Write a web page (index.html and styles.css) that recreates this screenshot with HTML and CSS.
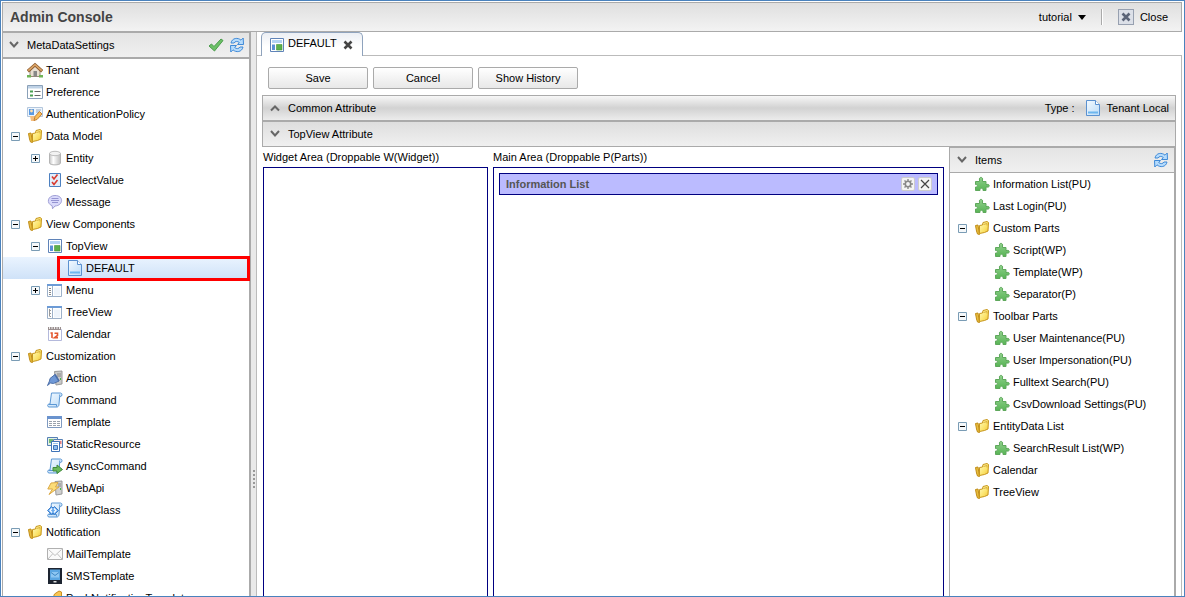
FILE: index.html
```html
<!DOCTYPE html>
<html lang="en">
<head>
<meta charset="utf-8">
<title>Admin Console</title>
<link rel="stylesheet" href="styles.css">
</head>
<body>
<svg class="sprite" aria-hidden="true">
  <defs>
    <linearGradient id="gold" x1="0" y1="0" x2="1" y2="1"><stop offset="0" stop-color="#fffbc0"/><stop offset=".6" stop-color="#fbe36a"/><stop offset="1" stop-color="#eebf35"/></linearGradient>
    <linearGradient id="sky" x1="0" y1="0" x2="1" y2="1"><stop offset="0" stop-color="#f4faff"/><stop offset="1" stop-color="#bcdcf8"/></linearGradient>
    <linearGradient id="steel" x1="0" y1="0" x2="1" y2="0"><stop offset="0" stop-color="#c4c4c4"/><stop offset=".35" stop-color="#fff"/><stop offset="1" stop-color="#bcbcbc"/></linearGradient>
    <linearGradient id="leaf" x1="0" y1="0" x2="0" y2="1"><stop offset="0" stop-color="#8fd08b"/><stop offset="1" stop-color="#58b455"/></linearGradient>
  </defs>
  <symbol id="folder" viewBox="0 0 16 16"><path d="M1.500 5.500 4 5l1.500 9.500-2-.5-1-3z" fill="#e9bd3c" stroke="#c08d18"/><path d="M5.500 13.500V5.500L8.500 5l.5-2.500L13 1.500l1.500 1-.5 8.500-3.500 1.500z" fill="url(#gold)" stroke="#c7961c"/><path d="M9.500 4.500 13 3.500v2" fill="none" stroke="#d8ae3a"/></symbol>
  <symbol id="home" viewBox="0 0 16 16"><path d="M3 8v6.500h10V8L8 4z" fill="#e9dfd2" stroke="#9b8a78"/><path d="M.8 9.200 8 2.800l7.200 6.400" fill="none" stroke="#8f5d30" stroke-width="3.200"/><path d="M1.300 8.700 8 2.700l6.700 6" fill="none" stroke="#dca668" stroke-width="1.600"/><path d="M6.500 9h3.500v5.500H6.500z" fill="#888"/><path d="M0 13h4v2.500H0zM12 13h4v2.500h-4z" fill="#6fb457"/></symbol>
  <symbol id="pref" viewBox="0 0 16 16"><path d="M.5 1.500h15v13H.5z" fill="#fff" stroke="#8aa0b8"/><path d="M1 2h14v2.500H1z" fill="#bfd2e6"/><path d="M3 6.500h3v2H3zM3 10.500h3v2H3z" fill="#4aa052"/><path d="M7.500 7.500h6M7.500 11.500h6" stroke="#666"/></symbol>
  <symbol id="auth" viewBox="0 0 16 16"><path d="M.5 1.500h15v9H.5z" fill="#eef5fc" stroke="#b3c6dc"/><path d="M2 3h5v6H2z" fill="#5b9ae2"/><circle cx="4.500" cy="5" r="1.400" fill="#ffe0b0"/><path d="M9 4h5M9 6h4" stroke="#93a9c4"/><path d="M3 10h4l1 5H4z" fill="#f5bf80"/><path d="m7 14.500 1-4 4.500-5L15 8l-5 5.500z" fill="#f9bd58" stroke="#c27f34"/></symbol>
  <symbol id="entity" viewBox="0 0 16 16"><path d="M2.500 3.500v9.500c0 2.500 11 2.500 11 0V3.500z" fill="url(#steel)" stroke="#b4b4b4"/><ellipse cx="8" cy="3.500" rx="5.500" ry="2.200" fill="#f2f2f2" stroke="#bdbdbd"/></symbol>
  <symbol id="select" viewBox="0 0 16 16"><path d="M2.500 1.500h11v13h-11z" fill="#e2eefb" stroke="#4c80c0"/><path d="m5 4.500 2 2.500 3.500-4.500M5 10l2 2.500L10.500 8" fill="none" stroke="#d83a2f" stroke-width="1.600"/></symbol>
  <symbol id="message" viewBox="0 0 16 16"><path d="M8 1.500c9 0 8.500 10 0 10.500l-2.500 2.800-.3-3C-1 9.500.5 1.500 8 1.500z" fill="#dadafb" stroke="#a09fd6"/><path d="M4.500 4.500h7M4 6.500h8M5 8.500h6" stroke="#9594d2"/></symbol>
  <symbol id="topview" viewBox="0 0 16 16"><path d="M1.500 1.500h13v13h-13z" fill="#fff" stroke="#5f83b8"/><path d="M3 3h10v3H3z" fill="#b3d3f3"/><path d="M3 7.500h3V13H3z" fill="#5a90d4"/><path d="M7.500 7.500H13V13H7.500z" fill="#5cb04c" stroke="#459638" stroke-width=".6"/></symbol>
  <symbol id="page" viewBox="0 0 16 16"><path d="M1.500.5h9l4 4v11h-13z" fill="url(#sky)" stroke="#5b91d0"/><path d="M10.500.5v4h4" fill="#fff" stroke="#5b91d0"/><path d="M3 12.500h10" stroke="#6db6ee" stroke-width="2"/></symbol>
  <symbol id="menu" viewBox="0 0 16 16"><path d="M.5 2.500h14v12H.5z" fill="#fff" stroke="#9db1c9"/><path d="M0 2h15v2H0z" fill="#6c9bd6"/><path d="M5.500 4v10" stroke="#9db1c9"/><path d="M2 6.500h2M2 8.500h2M2 10.500h2M2 12.500h2" stroke="#888"/><path d="M7 5.500h6v8H7z" fill="#eef4fb"/></symbol>
  <symbol id="treeview" viewBox="0 0 16 16"><path d="M.5 2.500h14v12H.5z" fill="#fff" stroke="#9db1c9"/><path d="M0 2h15v2H0z" fill="#6c9bd6"/><path d="M5.500 4v10" stroke="#9db1c9"/><path d="M2.500 5v7.500M2 6.500h2M3 9.500h1M3 12.500h1" stroke="#999"/><path d="M7 5.500h6v8H7z" fill="#eef4fb"/></symbol>
  <symbol id="calendar" viewBox="0 0 16 16"><path d="M1.500 3.500h13v11h-13z" fill="#fff" stroke="#b4b9dc"/><path d="M1 1h13v3H1z" fill="#9a8f8f"/><path d="M2.500 1v2M5 1v2M7.500 1v2M10 1v2M12.500 1v2" stroke="#eee"/><path d="M3.500 7H5v5M7.500 7.200h3v2.300l-3 2.300H11" fill="none" stroke="#e4582f" stroke-width="1.600"/></symbol>
  <symbol id="action" viewBox="0 0 16 16"><path d="M7.500 1.500 15 1v13l-6 1z" fill="#c9c9c9" stroke="#999"/><path d="M10 4h4M10 6h4" stroke="#888"/><path d="M13 8h1v2h-1z" fill="#4b4"/><path d="M.5 15.500 2.500 11 3 8.500l5-4 4 6.500-5.500 2.500-3-.5z" fill="#6f98d6" stroke="#4d6fa8"/><path d="m8 4.500 4 6.500" stroke="#4d6fa8" stroke-width="1.500"/></symbol>
  <symbol id="command" viewBox="0 0 16 16"><path d="M4.500 1h9c2 0 2 3.500 0 3.500h-.8L12 12c0 3-2 3-2 3H2c-1.800 0-1.800-3 0-3h1z" fill="url(#sky)" stroke="#5b97d4"/><path d="M12.700 4.500V2.500M2 12.500h7.500v2" fill="none" stroke="#5b97d4"/></symbol>
  <symbol id="template" viewBox="0 0 16 16"><path d="M.5 2.500h14v11H.5z" fill="#fff" stroke="#7f9ac0"/><path d="M0 2h15v3H0z" fill="#6a93ce"/><path d="M2 7.500h11M2 9.500h11M2 11.500h11" stroke="#9aa2ac" stroke-dasharray="3 1"/></symbol>
  <symbol id="static" viewBox="0 0 16 16"><path d="M.5 1.500h10v8H.5z" fill="#e3f0e3" stroke="#5580b5"/><path d="M2 3h4v4H2z" fill="#72b872"/><path d="M6.500 3.500h9v8h-9z" fill="#fbeaea" stroke="#5580b5"/><path d="M12 5h2.500v3H12z" fill="#e07f7f"/><path d="M4.500 5.500h8v10h-8z" fill="#fff" stroke="#3f74b8"/><path d="M6 7h5v1H6z" fill="#9cc4ec"/><path d="M6.500 9.500h4v4h-4z" fill="#8dbbec" stroke="#3f74b8"/></symbol>
  <symbol id="async" viewBox="0 0 16 16"><use href="#command"/><path d="M6 9.500h4V7l5.500 4.500-5.500 4V13H6z" fill="#6aba5c" stroke="#40893a"/></symbol>
  <symbol id="webapi" viewBox="0 0 16 16"><path d="M8 1.500 15 1v13l-6 1z" fill="#cfcfcf" stroke="#999"/><path d="M11 4h3M11 6h3" stroke="#888"/><path d="M13 8h1v2h-1z" fill="#4b4"/><path d="m4 3 7-.5L8.500 7H12L2 14.500 5.500 9H.8z" fill="#fcdc78" stroke="#dba845"/></symbol>
  <symbol id="utility" viewBox="0 0 16 16"><use href="#command"/><path d="m4.500 4.500-4 4 4 4L6 11l1.500 1.500 4-4-4-4L6 6z" fill="#6aabee" stroke="#3f7fcc"/><path d="m5 6.500-2 2 2 2M7 6.500l2 2-2 2" fill="none" stroke="#fff" stroke-width="1.200"/></symbol>
  <symbol id="mail" viewBox="0 0 16 16"><path d="M.5 2.500h15v11H.5z" fill="#fafafa" stroke="#b0b0b0"/><path d="m1.500 3.500 6.500 6 6.500-6M1 13l4.500-5M15 13l-4.500-5" fill="none" stroke="#c0c0c0"/></symbol>
  <symbol id="sms" viewBox="0 0 16 16"><path d="M1 0h14v16H1z" fill="#1d2430"/><path d="M3 1.500h10V12H3z" fill="#5aa6e2"/><path d="M4 4h8v5.500H4z" fill="#8cc6f2"/><path d="m4 4.500 4 3 4-3" fill="none" stroke="#2a76b8" stroke-width=".8"/><path d="M6.500 13h3v1.500h-3z" fill="#ddd"/></symbol>
  <symbol id="bell" viewBox="0 0 16 16"><path d="M1.500 11.500 6 8l1.500-4L12 1l2.500 1v4L10 12l-2 2z" fill="#f8c653" stroke="#cd8f22"/><circle cx="4.500" cy="13" r="2" fill="#c98715"/></symbol>
  <symbol id="puzzle" viewBox="0 0 16 16"><path d="M1.500 5.500h4V4c-1-3.500 4-3.500 3 0v1.500h3.500v3h1c3-1 3 3.500 0 2.500h-1v3.500H9c.5-3-3.500-3-3 0H1.500V11C4 11.500 4 8 1.500 8.500z" fill="url(#leaf)" stroke="#5fa85c"/></symbol>
  <symbol id="refresh" viewBox="0 0 16 16"><path d="M2 6C3 .8 9 .2 12 3.200L14.200 1l.3 6.500H8.500l1.800-2C8.500 3.800 6 4.200 5 6zM14 10c-1 5.200-7 5.800-10 2.800L1.800 15l-.3-6.500h6l-1.800 2c1.800 1.700 4.300 1.300 5.300-.5z" fill="#b5dbfc" stroke="#3f8ad8"/></symbol>
  <symbol id="check" viewBox="0 0 16 16"><path d="m1 9 2.500-2L6 9.500l7-7.500L15 3.500 6.500 14z" fill="#6cc067" stroke="#4b9c4c"/></symbol>
  <symbol id="down" viewBox="0 0 10 8"><path d="m1 1 4 4.500L9 1" fill="none" stroke="#666" stroke-width="2"/></symbol>
  <symbol id="up" viewBox="0 0 10 8"><path d="m1 6.500 4-4 4 4" fill="none" stroke="#666" stroke-width="2"/></symbol>
  <symbol id="minus" viewBox="0 0 9 9"><path d="M.5.500h8v8h-8z" fill="#f5f8fa" stroke="#7a9cb5"/><path d="M2 4.500h5" stroke="#000"/></symbol>
  <symbol id="plus" viewBox="0 0 9 9"><path d="M.5.500h8v8h-8z" fill="#f5f8fa" stroke="#7a9cb5"/><path d="M2 4.500h5M4.500 2v5" stroke="#000"/></symbol>
  <symbol id="x" viewBox="0 0 10 10"><path d="m1 1 8 8M9 1 1 9" stroke="currentColor" stroke-width="1.200"/></symbol>
  <symbol id="bold-x" viewBox="0 0 10 10"><path d="m1.500 1.500 7 7M8.500 1.500l-7 7" stroke="currentColor" stroke-width="2.600"/></symbol>
  <symbol id="gear" viewBox="0 0 10 10"><circle cx="5" cy="5" r="2.700" fill="none" stroke="#888" stroke-width="1.600"/><path d="M5 0v2M5 8v2M0 5h2M8 5h2M1.500 1.500l1.300 1.300M7.200 7.200l1.300 1.300M8.500 1.500 7.200 2.800M2.800 7.200 1.500 8.500" stroke="#888" stroke-width="1.400"/></symbol>
</svg>

<header class="topbar">
  <h1 class="topbar-title">Admin Console</h1>
  <button class="plain user-menu" type="button">tutorial <span class="caret"></span></button>
  <span class="divider"></span>
  <button class="plain close-button" type="button"><span class="close-box"><svg class="glyph"><use href="#bold-x"/></svg></span>Close</button>
</header>

<div class="workspace">
  <aside class="sidebar">
    <div class="panel-header">
      <button class="plain panel-toggle" type="button"><svg class="chevron"><use href="#down"/></svg>MetaDataSettings</button>
      <button class="plain" type="button" aria-label="Check"><svg class="icon"><use href="#check"/></svg></button>
      <button class="plain" type="button" aria-label="Refresh"><svg class="icon"><use href="#refresh"/></svg></button>
    </div>
    <ul class="tree">
      <li><div class="row"><svg class="icon"><use href="#home"/></svg>Tenant</div></li>
      <li><div class="row"><svg class="icon"><use href="#pref"/></svg>Preference</div></li>
      <li><div class="row"><svg class="icon"><use href="#auth"/></svg>AuthenticationPolicy</div></li>
      <li><div class="row"><button class="plain toggle" type="button" aria-label="Collapse"><svg class="box"><use href="#minus"/></svg></button><svg class="icon"><use href="#folder"/></svg>Data Model</div>
        <ul>
          <li><div class="row"><button class="plain toggle" type="button" aria-label="Expand"><svg class="box"><use href="#plus"/></svg></button><svg class="icon"><use href="#entity"/></svg>Entity</div></li>
          <li><div class="row"><svg class="icon"><use href="#select"/></svg>SelectValue</div></li>
          <li><div class="row"><svg class="icon"><use href="#message"/></svg>Message</div></li>
        </ul>
      </li>
      <li><div class="row"><button class="plain toggle" type="button" aria-label="Collapse"><svg class="box"><use href="#minus"/></svg></button><svg class="icon"><use href="#folder"/></svg>View Components</div>
        <ul>
          <li><div class="row"><button class="plain toggle" type="button" aria-label="Collapse"><svg class="box"><use href="#minus"/></svg></button><svg class="icon"><use href="#topview"/></svg>TopView</div>
            <ul>
              <li><div class="row selected"><svg class="icon"><use href="#page"/></svg>DEFAULT</div></li>
            </ul>
          </li>
          <li><div class="row"><button class="plain toggle" type="button" aria-label="Expand"><svg class="box"><use href="#plus"/></svg></button><svg class="icon"><use href="#menu"/></svg>Menu</div></li>
          <li><div class="row"><svg class="icon"><use href="#treeview"/></svg>TreeView</div></li>
          <li><div class="row"><svg class="icon"><use href="#calendar"/></svg>Calendar</div></li>
        </ul>
      </li>
      <li><div class="row"><button class="plain toggle" type="button" aria-label="Collapse"><svg class="box"><use href="#minus"/></svg></button><svg class="icon"><use href="#folder"/></svg>Customization</div>
        <ul>
          <li><div class="row"><svg class="icon"><use href="#action"/></svg>Action</div></li>
          <li><div class="row"><svg class="icon"><use href="#command"/></svg>Command</div></li>
          <li><div class="row"><svg class="icon"><use href="#template"/></svg>Template</div></li>
          <li><div class="row"><svg class="icon"><use href="#static"/></svg>StaticResource</div></li>
          <li><div class="row"><svg class="icon"><use href="#async"/></svg>AsyncCommand</div></li>
          <li><div class="row"><svg class="icon"><use href="#webapi"/></svg>WebApi</div></li>
          <li><div class="row"><svg class="icon"><use href="#utility"/></svg>UtilityClass</div></li>
        </ul>
      </li>
      <li><div class="row"><button class="plain toggle" type="button" aria-label="Collapse"><svg class="box"><use href="#minus"/></svg></button><svg class="icon"><use href="#folder"/></svg>Notification</div>
        <ul>
          <li><div class="row"><svg class="icon"><use href="#mail"/></svg>MailTemplate</div></li>
          <li><div class="row"><svg class="icon"><use href="#sms"/></svg>SMSTemplate</div></li>
          <li><div class="row"><svg class="icon"><use href="#bell"/></svg>PushNotificationTemplate</div></li>
        </ul>
      </li>
    </ul>
  </aside>

  <div class="splitter"><span class="grip"></span></div>

  <main class="main">
    <div class="tabs">
      <div class="tab"><svg class="icon"><use href="#topview"/></svg><span class="tab-name">DEFAULT</span><button class="plain tab-close" type="button" aria-label="Close tab"><svg class="glyph"><use href="#bold-x"/></svg></button></div>
    </div>
    <div class="content">
      <div class="actions">
        <button class="action" type="button">Save</button>
        <button class="action" type="button">Cancel</button>
        <button class="action" type="button">Show History</button>
      </div>
      <div class="section-header">
        <button class="plain panel-toggle" type="button"><svg class="chevron"><use href="#up"/></svg>Common Attribute</button>
        <span class="type">Type :</span><svg class="icon"><use href="#page"/></svg><span>Tenant Local</span>
      </div>
      <div class="section-header">
        <button class="plain panel-toggle" type="button"><svg class="chevron"><use href="#down"/></svg>TopView Attribute</button>
      </div>
      <div class="layout">
        <section class="area">
          <h2 class="area-label">Widget Area (Droppable W(Widget))</h2>
          <div class="drop"></div>
        </section>
        <section class="area">
          <h2 class="area-label">Main Area (Droppable P(Parts))</h2>
          <div class="drop">
            <div class="part"><span class="part-name">Information List</span>
              <button class="part-button" type="button" aria-label="Settings"><svg class="glyph"><use href="#gear"/></svg></button>
              <button class="part-button" type="button" aria-label="Remove"><svg class="glyph"><use href="#x"/></svg></button>
            </div>
          </div>
        </section>
        <section class="items">
          <div class="panel-header">
            <button class="plain panel-toggle" type="button"><svg class="chevron"><use href="#down"/></svg>Items</button>
            <button class="plain" type="button" aria-label="Refresh items"><svg class="icon"><use href="#refresh"/></svg></button>
          </div>
          <ul class="tree">
            <li><div class="row"><svg class="icon"><use href="#puzzle"/></svg>Information List(PU)</div></li>
            <li><div class="row"><svg class="icon"><use href="#puzzle"/></svg>Last Login(PU)</div></li>
            <li><div class="row"><button class="plain toggle" type="button" aria-label="Collapse"><svg class="box"><use href="#minus"/></svg></button><svg class="icon"><use href="#folder"/></svg>Custom Parts</div>
              <ul>
                <li><div class="row"><svg class="icon"><use href="#puzzle"/></svg>Script(WP)</div></li>
                <li><div class="row"><svg class="icon"><use href="#puzzle"/></svg>Template(WP)</div></li>
                <li><div class="row"><svg class="icon"><use href="#puzzle"/></svg>Separator(P)</div></li>
              </ul>
            </li>
            <li><div class="row"><button class="plain toggle" type="button" aria-label="Collapse"><svg class="box"><use href="#minus"/></svg></button><svg class="icon"><use href="#folder"/></svg>Toolbar Parts</div>
              <ul>
                <li><div class="row"><svg class="icon"><use href="#puzzle"/></svg>User Maintenance(PU)</div></li>
                <li><div class="row"><svg class="icon"><use href="#puzzle"/></svg>User Impersonation(PU)</div></li>
                <li><div class="row"><svg class="icon"><use href="#puzzle"/></svg>Fulltext Search(PU)</div></li>
                <li><div class="row"><svg class="icon"><use href="#puzzle"/></svg>CsvDownload Settings(PU)</div></li>
              </ul>
            </li>
            <li><div class="row"><button class="plain toggle" type="button" aria-label="Collapse"><svg class="box"><use href="#minus"/></svg></button><svg class="icon"><use href="#folder"/></svg>EntityData List</div>
              <ul>
                <li><div class="row"><svg class="icon"><use href="#puzzle"/></svg>SearchResult List(WP)</div></li>
              </ul>
            </li>
            <li><div class="row"><svg class="icon"><use href="#folder"/></svg>Calendar</div></li>
            <li><div class="row"><svg class="icon"><use href="#folder"/></svg>TreeView</div></li>
          </ul>
        </section>
      </div>
    </div>
  </main>
</div>
</body>
</html>
```
FILE: styles.css
```css
* { box-sizing: border-box; }

body {
  margin: 0;
  height: 100vh;
  display: flex;
  flex-direction: column;
  padding: 1px 2px 0 1px;
  border: 1px solid #4a82bd;
  overflow: hidden;
  background: #fff;
  color: #000;
  font: 11px/14px "Liberation Sans", Arial, sans-serif;
}

.sprite { position: absolute; width: 0; height: 0; }
.icon { width: 16px; height: 16px; flex: none; }
.chevron { width: 10px; height: 8px; flex: none; }
.glyph { width: 10px; height: 10px; flex: none; }
.box { width: 9px; height: 9px; flex: none; }

.plain {
  display: flex;
  align-items: center;
  margin: 0;
  padding: 0;
  border: 0;
  background: none;
  color: inherit;
  font: inherit;
}

.topbar {
  flex: none;
  display: flex;
  align-items: center;
  height: 30px;
  padding: 0 13px 0 7px;
  border: 1px solid #aaa;
  background: linear-gradient(#dfdfdf, #f3f3f3);
}
.topbar-title { flex: 1; margin: 0; color: #444; font-size: 14px; line-height: 18px; }
.user-menu { gap: 6px; }
.caret { border: 4px solid transparent; border-top: 5px solid #000; border-bottom: 0; }
.divider { width: 2px; height: 16px; margin: 0 15px; border-left: 1px solid #aaa; border-right: 1px solid #fff; }
.close-button { gap: 6px; }
.close-box {
  display: flex;
  align-items: center;
  justify-content: center;
  width: 16px;
  height: 16px;
  border: 1px solid #97a0b0;
  background: #dce0e8;
  color: #5b6478;
}

.workspace { flex: 1; display: flex; min-height: 0; }

.sidebar {
  flex: none;
  width: 249px;
  border-left: 1px solid #aaa;
  border-right: 2px solid #aaa;
}
.panel-header {
  display: flex;
  align-items: center;
  gap: 5px;
  height: 27px;
  padding: 0 4px 0 6px;
  border-top: 1px solid #aaa;
  border-bottom: 2px solid #aaa;
  background: linear-gradient(#e4e4e4, #f0f0f0);
}
.panel-toggle { flex: 1; gap: 8px; }

.tree, .tree ul { margin: 0; padding: 0; list-style: none; }
.row {
  position: relative;
  display: flex;
  align-items: center;
  gap: 3px;
  height: 22px;
  padding-left: 24px;
  white-space: nowrap;
}
.tree ul .row { padding-left: 44px; }
.tree ul ul .row { padding-left: 64px; }
.toggle { width: 13px; margin-left: -16px; }
.row.selected { background: linear-gradient(#eaf4ff, #cfe2f8); }
.row.selected::after {
  content: "";
  position: absolute;
  inset: -1px -1px -2px 54px;
  border: 3px solid #f00;
}

.splitter {
  flex: none;
  display: flex;
  align-items: center;
  justify-content: center;
  width: 6px;
  border-right: 1px solid #bbb;
  background: #e9e9e9;
}
.grip {
  width: 2px;
  height: 19px;
  margin-top: 330px;
  background: repeating-linear-gradient(#999 0 2px, transparent 2px 4px);
}

.main { flex: 1; min-width: 0; display: flex; flex-direction: column; }
.tabs { flex: none; height: 24px; padding-left: 4px; border-bottom: 1px solid #bbb; }
.tab {
  display: flex;
  align-items: center;
  gap: 3px;
  width: 102px;
  height: 24px;
  padding: 0 9px 0 7px;
  border: 1px solid #8fa3bd;
  border-bottom: 0;
  border-radius: 5px 5px 0 0;
  background: linear-gradient(#eceff4, #fff 60%);
}
.tab-name { padding-bottom: 4px; }
.tab-close { margin-left: auto; color: #444; }

.content {
  flex: 1;
  display: flex;
  flex-direction: column;
  min-height: 0;
  padding: 11px 5px 0;
  border-right: 1px solid #bbb;
}
.actions { flex: none; display: flex; gap: 5px; margin: 0 6px 6px; }
.action {
  width: 100px;
  height: 22px;
  padding: 0;
  border: 1px solid #aaa;
  border-radius: 2px;
  background: linear-gradient(#fff, #f3f3f3 50%, #e8e8e8);
  color: #000;
  font: inherit;
}
.section-header {
  flex: none;
  display: flex;
  align-items: center;
  gap: 6px;
  height: 26px;
  padding: 0 6px 0 7px;
  border: 1px solid #aaa;
  background: linear-gradient(#f7f7f7, #d2d2d2 50%, #ececec);
}
.section-header + .section-header { background: linear-gradient(#dedede, #f0f0f0); }
.type { margin-right: 4px; }

.layout {
  flex: 1;
  display: grid;
  grid-template-columns: 225px 1fr 227px;
  gap: 5px;
  min-height: 0;
  padding-left: 1px;
}
.area { display: flex; flex-direction: column; min-width: 0; min-height: 0; }
.area-label { height: 20px; margin: 0; font-size: 11px; font-weight: 400; line-height: 20px; }
.drop { flex: 1; padding: 5px; border: 1px solid #000080; border-bottom: 0; }
.part {
  display: flex;
  align-items: center;
  gap: 3px;
  height: 22px;
  padding: 0 5px 0 6px;
  border: 1px solid #000080;
  background: #bbf;
  color: #555;
  font-weight: 700;
}
.part-name { flex: 1; }
.part-button {
  display: flex;
  align-items: center;
  justify-content: center;
  width: 14px;
  height: 14px;
  padding: 0;
  border: 1px solid #ccc;
  border-radius: 2px;
  background: #f4f4f4;
  color: #444;
}

.items { min-height: 0; overflow: hidden; border-left: 1px solid #aaa; border-right: 2px solid #aaa; }
.items .panel-header { height: 26px; padding: 0 5px 0 7px; border-bottom-width: 1px; }
```
